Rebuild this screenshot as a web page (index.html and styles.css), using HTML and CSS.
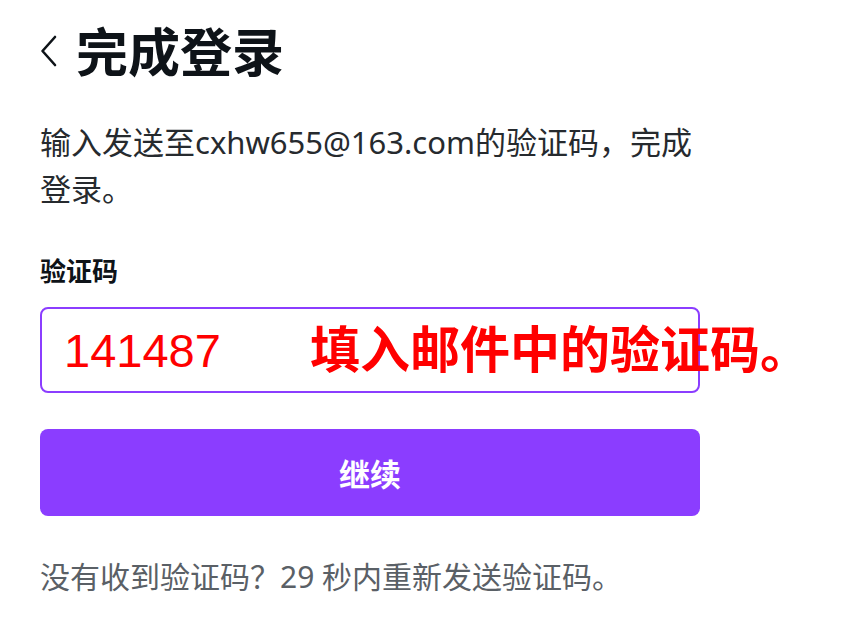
FILE: index.html
```html
<!DOCTYPE html>
<html lang="zh-CN">
  <head>
    <meta charset="UTF-8" />
    <meta name="viewport" content="width=device-width, initial-scale=1.0" />
    <title>完成登录</title>
    <link rel="stylesheet" href="styles.css">
  </head>
  <body>
    <div class="page">
      <header class="header">
        <button class="back" type="button" aria-label="返回">
          <svg width="18" height="32" viewBox="0 0 18 32">
            <polyline points="15,2 2.5,16 15,30" fill="none" stroke="#0e1318" stroke-width="2.6" stroke-linecap="round" stroke-linejoin="round" />
          </svg>
        </button>
        <h1>完成登录</h1>
      </header>

      <p class="intro">输入发送至cxhw655@163.com的验证码，完成登录。</p>

      <form class="form">
        <label for="code">验证码</label>
        <div class="field">
          <input id="code" type="text" value="141487" />
          <span class="note">填入邮件中的验证码。</span>
        </div>
        <button class="submit" type="button">继续</button>
      </form>

      <p class="resend">没有收到验证码？29 秒内重新发送验证码。</p>
    </div>
  </body>
</html>
```

FILE: styles.css
```css
* {
  margin: 0;
  padding: 0;
  box-sizing: border-box;
}

body {
  background-color: white;
  font-family: "Noto Sans", "Noto Sans CJK SC", sans-serif;
  color: #0e1318;
}

.page {
  width: 700px;
  padding: 19px 0 0 40px;
}

.header {
  display: flex;
  align-items: center;
  height: 62px;
}

.back {
  display: flex;
  border: 0;
  background: none;
  margin-right: 18px;
  margin-top: 2px;
}

h1 {
  font-family: "Noto Sans CJK SC", sans-serif;
  font-size: 52px;
  font-weight: 700;
  line-height: 62px;
}

.intro {
  margin-top: 38px;
  width: 660px;
  font-size: 31px;
  line-height: 47px;
  color: #262a2e;
}

.form {
  display: flex;
  flex-direction: column;
  width: 660px;
}

label {
  margin-top: 39px;
  font-family: "Noto Sans CJK SC", sans-serif;
  font-size: 26px;
  font-weight: 700;
  line-height: 36px;
}

.field {
  position: relative;
  margin-top: 19px;
}

input {
  width: 100%;
  height: 86px;
  padding: 0 22px;
  border: 2px solid #8b3dff;
  border-radius: 8px;
  outline: none;
  font-family: "Liberation Sans", sans-serif;
  font-size: 47px;
  color: #ff0000;
}

.note {
  position: absolute;
  left: 270px;
  top: 11px;
  white-space: nowrap;
  font-family: "Noto Sans CJK SC", sans-serif;
  font-size: 50px;
  font-weight: 700;
  line-height: 56px;
  color: #ff0000;
}

.submit {
  margin-top: 36px;
  height: 87px;
  border: 0;
  border-radius: 8px;
  background-color: #8b3dff;
  font-family: "Noto Sans CJK SC", sans-serif;
  font-size: 31px;
  font-weight: 700;
  color: white;
}

.resend {
  margin-top: 41px;
  font-size: 30px;
  line-height: 40px;
  color: #5a6066;
}
```
